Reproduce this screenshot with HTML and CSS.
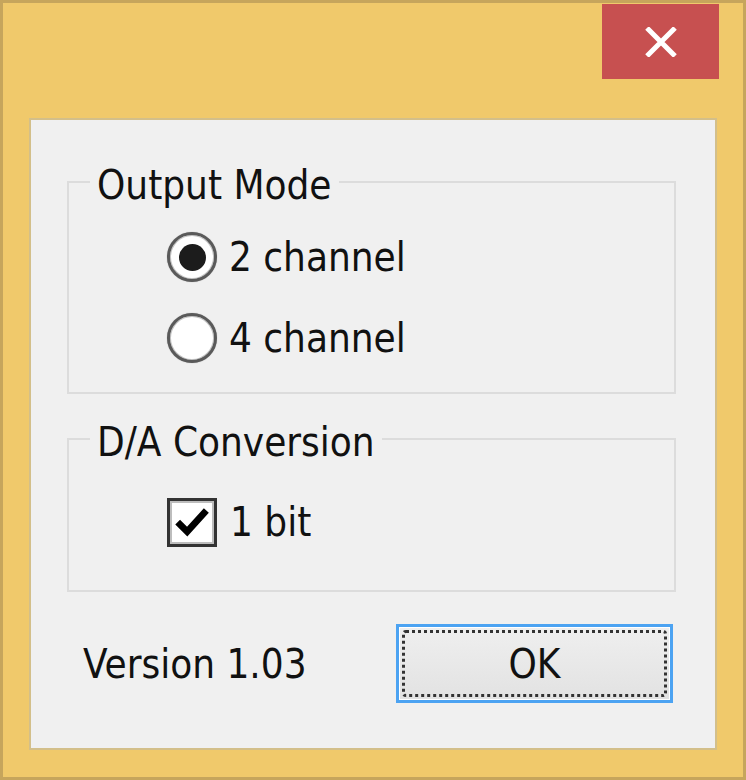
FILE: index.html
```html
<!DOCTYPE html>
<html>
<head>
<meta charset="utf-8">
<link rel="stylesheet" href="styles.css">
</head>
<body>
<div class="window">
  <div class="titlebar">
    <div class="close">
      <svg width="32" height="30" viewBox="0 0 32 30"><path d="M2 1 L30 29 M30 1 L2 29" stroke="#fff" stroke-width="5" fill="none"/></svg>
    </div>
  </div>
  <div class="client">
    <fieldset class="group group-mode">
      <legend class="legend">Output Mode</legend>
      <div class="row">
        <span class="radio checked"><span class="dot"></span></span>
        <span class="label">2 channel</span>
      </div>
      <div class="row row2">
        <span class="radio"></span>
        <span class="label">4 channel</span>
      </div>
    </fieldset>
    <fieldset class="group group-da">
      <legend class="legend">D/A Conversion</legend>
      <div class="row">
        <span class="check">
          <svg width="46" height="45" viewBox="0 0 46 45"><path d="M8 22 L18 32 L38 10" stroke="#000" stroke-width="7" fill="none" stroke-linejoin="miter"/></svg>
        </span>
        <span class="label label-check">1 bit</span>
      </div>
    </fieldset>
    <div class="footer">
      <span class="version">Version 1.03</span>
      <button class="ok"><span class="focus">OK</span></button>
    </div>
  </div>
</div>
</body>
</html>
```
FILE: styles.css
```css
html, body {
  margin: 0;
  padding: 0;
  background: #f0c96b;
}
.window {
  width: 746px;
  height: 780px;
  box-sizing: border-box;
  border: 3px solid #c6a55c;
  background: #f0c96b;
  font-family: "DejaVu Sans Condensed", "DejaVu Sans", sans-serif;
  font-stretch: condensed;
  font-size: 40px;
  color: #111;
}
.titlebar {
  height: 115px;
  display: flex;
  justify-content: flex-end;
  align-items: flex-start;
}
.close {
  width: 117px;
  height: 75px;
  margin-top: 1px;
  margin-right: 24px;
  background: #c75050;
  display: flex;
  align-items: center;
  justify-content: center;
}
.client {
  margin-left: 26px;
  width: 688px;
  height: 632px;
  box-sizing: border-box;
  border: 2px solid #d3bf8a;
  background: #f0f0f0;
  padding-top: 42px;
}
.group {
  margin: 0 39px 0 36px;
  padding: 0 0 0 98px;
  border: 2px solid #dcdcdc;
  min-width: 0;
}
.legend {
  margin-left: -77px;
  padding: 0 7px;
  line-height: 46px;
  height: 40px;
}
.group-mode {
  padding-top: 30px;
  padding-bottom: 29px;
}
.group-da {
  margin-top: 25px;
  padding-top: 38px;
  padding-bottom: 43px;
}
.row {
  display: flex;
  align-items: center;
  height: 50px;
}
.row2 {
  margin-top: 31px;
}
.label {
  margin-left: 12px;
  line-height: 54px;
}
.radio {
  width: 50px;
  height: 50px;
  box-sizing: border-box;
  border-radius: 50%;
  border: 3px solid #5a5a5a;
  background: #fff;
  box-shadow: inset 0 0 0 1px #c4c4c4, 0 0 1px #999;
  display: flex;
  align-items: center;
  justify-content: center;
  flex: none;
}
.dot {
  width: 27px;
  height: 27px;
  border-radius: 50%;
  background: #1c1c1c;
}
.check {
  width: 50px;
  height: 49px;
  box-sizing: border-box;
  border: 3px solid #333;
  background: #fff;
  box-shadow: inset 0 0 0 2px #bdbdbd;
  display: flex;
  align-items: center;
  justify-content: center;
  flex: none;
}
.check svg {
  display: block;
}
.label-check {
  margin-left: 13px;
}
.footer {
  display: flex;
  align-items: center;
  justify-content: space-between;
  margin-top: 32px;
  padding-left: 52px;
  padding-right: 42px;
}
.ok {
  width: 277px;
  height: 79px;
  box-sizing: border-box;
  border: 3px solid #4ca3f2;
  background: linear-gradient(#efefef, #e2e2e2);
  padding: 3px;
  margin: 0;
  font: inherit;
  color: #111;
  box-shadow: inset 0 0 0 1px #fff;
}
.focus {
  display: flex;
  align-items: center;
  justify-content: center;
  width: 100%;
  height: 100%;
  box-sizing: border-box;
  border: 3px dotted #333;
  border-radius: 4px;
}
```
